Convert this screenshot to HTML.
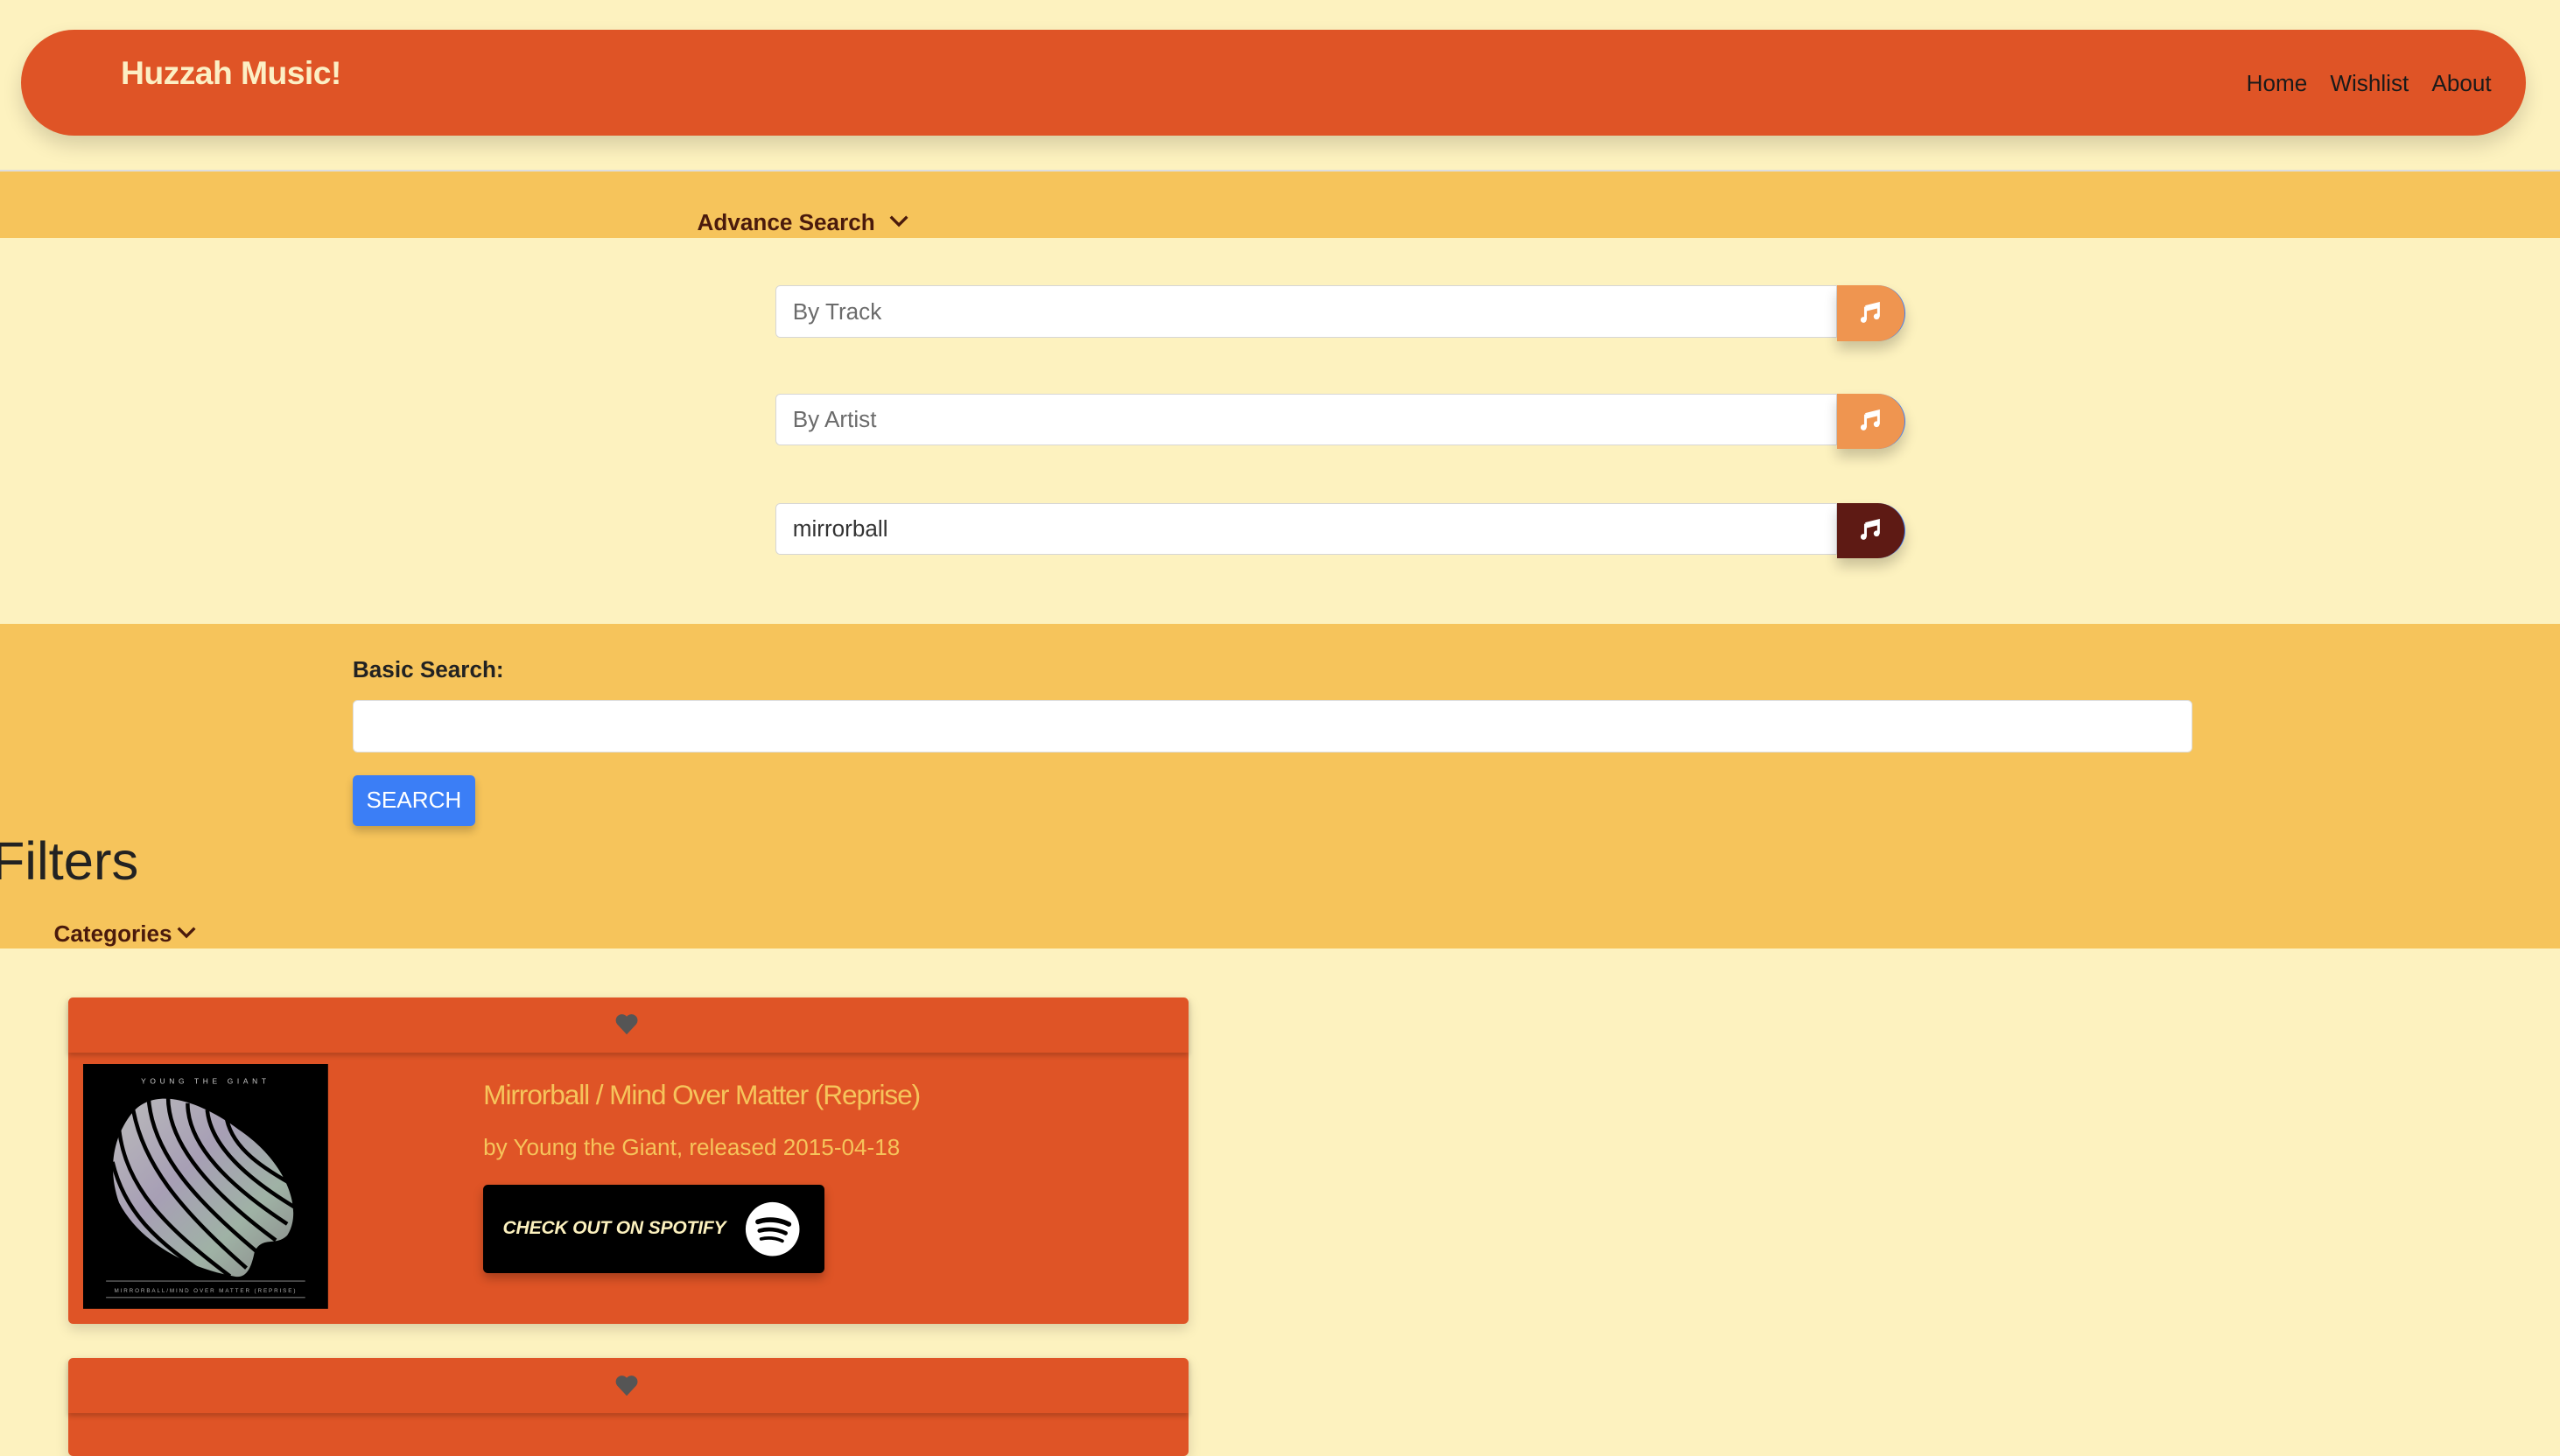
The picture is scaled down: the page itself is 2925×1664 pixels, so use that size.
<!DOCTYPE html>
<html><head><meta charset="utf-8">
<style>
html,body{margin:0;padding:0}
body{width:1568px;height:865px;overflow:hidden;background:#FDF2BF;zoom:1.86543;font-family:"Liberation Sans",sans-serif;position:relative}
.a{position:absolute}
.nav{left:13px;top:18px;width:1534px;height:65px;background:#DF5426;border-radius:33px;box-shadow:0 6px 12px rgba(0,0,0,.15)}
.title{left:74px;top:33px;font-size:20px;font-weight:bold;color:#FCEFC4;letter-spacing:-.3px}
.links{right:42px;top:43px;font-size:14px;color:#1a1a1a}
.links span{margin-left:14px}
.band{left:0;width:1568px;background:#F6C45B}
.inp{left:475px;width:650px;height:32px;background:#fff;border:1px solid #d6d6d6;border-radius:3px 0 0 3px;box-sizing:border-box;font-size:14px;color:#6b6b6b;padding:8px 10px;line-height:16px}
.btn{left:1125px;width:42px;height:34px;border-radius:0 17px 17px 0;box-shadow:0 5px 8px rgba(0,0,0,.2);border-right:1px solid #3B7EF6;display:flex;align-items:center;justify-content:center;box-sizing:border-box}
.card{left:42px;width:686px;background:#DF5426;border-radius:3px;box-shadow:0 3px 8px rgba(0,0,0,.15)}
.hdr{position:absolute;left:0;top:0;width:686px;height:34px;box-shadow:0 2px 3px rgba(0,0,0,.2)}
</style></head><body>
<div class="a nav"></div>
<div class="a title">Huzzah Music!</div>
<div class="a links"><span>Home</span><span>Wishlist</span><span>About</span></div>
<div class="a" style="left:0;top:104px;width:1568px;height:1px;background:#ddd"></div>
<div class="a band" style="top:105px;height:41px"></div>
<div class="a" style="left:427px;top:128px;font-size:14px;font-weight:bold;color:#4a1a0c">Advance Search <svg width="14" height="10" viewBox="0 0 14 10" style="margin-left:4px"><path d="M2 2l5 5 5-5" stroke="#4a1a0c" stroke-width="1.8" fill="none"/></svg></div>

<div class="a inp" style="top:175px">By Track</div>
<div class="a btn" style="top:175px;background:#EF9550"><svg width="14" height="14" viewBox="0 0 14 14"><path d="M4 3v8M12 1v8M4 3l8-2v2l-8 2" stroke="#fff" stroke-width="1.6" fill="#fff"/><circle cx="2.8" cy="11" r="1.8" fill="#fff"/><circle cx="10.8" cy="9" r="1.8" fill="#fff"/></svg></div>
<div class="a inp" style="top:241px">By Artist</div>
<div class="a btn" style="top:241px;background:#EF9550"><svg width="14" height="14" viewBox="0 0 14 14"><path d="M4 3v8M12 1v8M4 3l8-2v2l-8 2" stroke="#fff" stroke-width="1.6" fill="#fff"/><circle cx="2.8" cy="11" r="1.8" fill="#fff"/><circle cx="10.8" cy="9" r="1.8" fill="#fff"/></svg></div>
<div class="a inp" style="top:308px;color:#333">mirrorball</div>
<div class="a btn" style="top:308px;background:#5E1A14"><svg width="14" height="14" viewBox="0 0 14 14"><path d="M4 3v8M12 1v8M4 3l8-2v2l-8 2" stroke="#fff" stroke-width="1.6" fill="#fff"/><circle cx="2.8" cy="11" r="1.8" fill="#fff"/><circle cx="10.8" cy="9" r="1.8" fill="#fff"/></svg></div>

<div class="a band" style="top:382px;height:199px"></div>
<div class="a" style="left:216px;top:402px;font-size:14px;font-weight:bold;color:#222">Basic Search:</div>
<div class="a" style="left:216px;top:429px;width:1127px;height:32px;background:#fff;border:1px solid #ddd;border-radius:3px;box-sizing:border-box"></div>
<div class="a" style="left:216px;top:475px;width:75px;height:31px;background:#3B7EF6;border-radius:3px;color:#fff;font-size:14px;text-align:center;line-height:31px;box-shadow:0 3px 5px rgba(0,0,0,.2)">SEARCH</div>
<div class="a" style="left:-5px;top:508px;font-size:33px;color:#222;line-height:40px">Filters</div>
<div class="a" style="left:33px;top:564px;font-size:14px;font-weight:bold;color:#4a1a0c">Categories<svg width="14" height="10" viewBox="0 0 14 10" style="margin-left:2px"><path d="M2 2l5 5 5-5" stroke="#4a1a0c" stroke-width="1.8" fill="none"/></svg></div>

<div class="a card" style="top:611px;height:200px">
 <div class="hdr"><svg class="a" style="left:335px;top:10px" width="14" height="13" viewBox="0 0 14 13"><path d="M7 13L1.2 6.8A3.6 3.6 0 0 1 7 2a3.6 3.6 0 0 1 5.8 4.8z" fill="#555"/></svg></div>
 <svg class="a" style="left:9px;top:41px" width="150" height="150" viewBox="0 0 150 150">
  <defs><linearGradient id="g" x1="0" y1="0" x2="1" y2="1"><stop offset="0" stop-color="#bbb"/><stop offset=".4" stop-color="#a79fb5"/><stop offset=".7" stop-color="#9fb2a5"/><stop offset="1" stop-color="#888"/></linearGradient></defs>
  <rect width="150" height="150" fill="#000"/>
  <text x="75" y="12" font-size="4.5" fill="#ccc" text-anchor="middle" letter-spacing="2.5" font-family="Liberation Sans">YOUNG THE GIANT</text>
  <path d="M30 30C45 12 75 25 95 40 125 60 135 90 125 105 118 112 110 105 105 115 103 125 100 132 92 130 65 125 35 110 22 85 15 65 18 45 30 30z" fill="url(#g)"/>
  <g stroke="#000" stroke-width="2.4" fill="none">
   <path d="M30 24C35 60 60 90 100 125"/><path d="M40 20C42 55 70 85 110 118"/><path d="M52 20C52 50 80 80 118 108"/><path d="M64 24C64 50 90 75 125 98"/><path d="M76 28C78 50 100 70 130 88"/><path d="M88 34C92 52 110 64 132 76"/><path d="M22 40C26 75 50 100 90 130"/><path d="M18 60C25 90 45 110 80 132"/>
  </g>
  <line x1="14" y1="133" x2="136" y2="133" stroke="#777" stroke-width=".6"/>
  <text x="75" y="140" font-size="3.4" fill="#aaa" text-anchor="middle" letter-spacing="1" font-family="Liberation Sans">MIRRORBALL/MIND OVER MATTER (REPRISE)</text>
  <line x1="14" y1="143" x2="136" y2="143" stroke="#777" stroke-width=".6"/>
 </svg>
 <div class="a" style="left:254px;top:50px;font-size:17px;color:#F6C45B;letter-spacing:-.6px">Mirrorball / Mind Over Matter (Reprise)</div>
 <div class="a" style="left:254px;top:84px;font-size:14px;color:#F6C45B">by Young the Giant, released 2015-04-18</div>
 <div class="a" style="left:254px;top:115px;width:209px;height:54px;background:#000;border-radius:3px;box-shadow:0 3px 6px rgba(0,0,0,.25)">
  <div class="a" style="left:12px;top:20px;font-size:11.3px;font-weight:bold;font-style:italic;color:#FDF2BF;letter-spacing:-.1px">CHECK OUT ON SPOTIFY</div>
  <svg class="a" style="left:160px;top:10px" width="34" height="34" viewBox="0 0 34 34"><circle cx="17" cy="17" r="16.5" fill="#fff"/><g stroke="#000" stroke-linecap="round" fill="none"><path d="M8 12.5C14 10.5 21 11 27 14" stroke-width="3"/><path d="M9 18C14 16.5 20 17 25 19.5" stroke-width="2.5"/><path d="M10 23C14 22 19 22.3 23 24.3" stroke-width="2"/></g></svg>
 </div>
</div>

<div class="a card" style="top:832px;height:60px">
 <div class="hdr"><svg class="a" style="left:335px;top:10px" width="14" height="13" viewBox="0 0 14 13"><path d="M7 13L1.2 6.8A3.6 3.6 0 0 1 7 2a3.6 3.6 0 0 1 5.8 4.8z" fill="#555"/></svg></div>
</div>
</body></html>
